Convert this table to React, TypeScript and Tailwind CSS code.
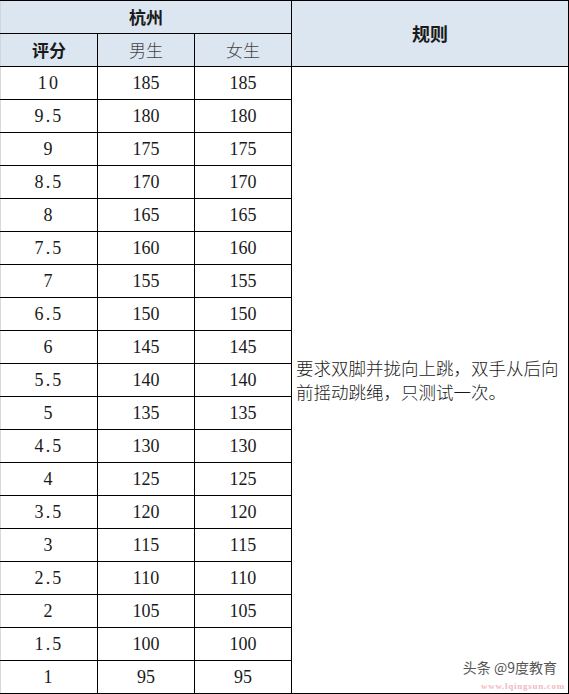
const ROWS: [string, string, string][] = [
  ['10', '185', '185'],
  ['9.5', '180', '180'],
  ['9', '175', '175'],
  ['8.5', '170', '170'],
  ['8', '165', '165'],
  ['7.5', '160', '160'],
  ['7', '155', '155'],
  ['6.5', '150', '150'],
  ['6', '145', '145'],
  ['5.5', '140', '140'],
  ['5', '135', '135'],
  ['4.5', '130', '130'],
  ['4', '125', '125'],
  ['3.5', '120', '120'],
  ['3', '115', '115'],
  ['2.5', '110', '110'],
  ['2', '105', '105'],
  ['1.5', '100', '100'],
  ['1', '95', '95'],
]

const cjk = "font-['Noto_Sans_CJK_SC',sans-serif]"
const num = "font-['Liberation_Serif','Noto_Sans_CJK_SC',serif]"

export default function App() {
  return (
    <div className="relative w-[569px] h-[694px] bg-white overflow-hidden">
      <table className="table-fixed border-collapse w-[568px] text-[#1a1a1a]">
        <colgroup>
          <col className="w-[97px]" />
          <col className="w-[97px]" />
          <col className="w-[97px]" />
          <col className="w-[277px]" />
        </colgroup>
        <thead>
          <tr className="h-[33px] bg-[#dce6f1]">
            <th colSpan={3} className={`border border-black border-l-[#cfd6de] p-0 text-[17px] font-bold ${cjk}`}>
              杭州
            </th>
            <th rowSpan={2} className={`border border-black p-0 text-[18px] font-bold ${cjk}`}>
              规则
            </th>
          </tr>
          <tr className="h-[33px] bg-[#dce6f1]">
            <th className={`border border-black border-l-[#cfd6de] p-0 text-[17px] font-bold ${cjk}`}>评分</th>
            <th className={`border border-black p-0 text-[17px] font-light text-[#444] ${cjk}`}>男生</th>
            <th className={`border border-black p-0 text-[17px] font-light text-[#444] ${cjk}`}>女生</th>
          </tr>
        </thead>
        <tbody>
          {ROWS.map((r, i) => (
            <tr key={r[0]} className="h-[33px]">
              <td className={`border border-black border-l-[#d8d8d8] p-0 text-center text-[18px] tracking-[0.12em] ${num}`}>{r[0]}</td>
              <td className={`border border-black p-0 text-center text-[18px] ${num}`}>{r[1]}</td>
              <td className={`border border-black p-0 text-center text-[18px] ${num}`}>{r[2]}</td>
              {i === 0 && (
                <td
                  rowSpan={ROWS.length}
                  className={`border border-black pl-[4px] pr-[2px] text-left align-middle text-[17.5px] leading-[24px] font-light ${cjk}`}
                >
                  要求双脚并拢向上跳，双手从后向前摇动跳绳，只测试一次。
                </td>
              )}
            </tr>
          ))}
        </tbody>
      </table>

      <div className={`absolute right-[12px] bottom-[16px] text-[14px] text-[#555] ${cjk}`}>头条 @9度教育</div>
      <div className="absolute right-[4px] bottom-[1px] text-[9px] font-bold tracking-[0.08em] text-[#f2b8c2] font-['Liberation_Serif',serif]">
        www.lqingsun.com
      </div>
    </div>
  )
}
